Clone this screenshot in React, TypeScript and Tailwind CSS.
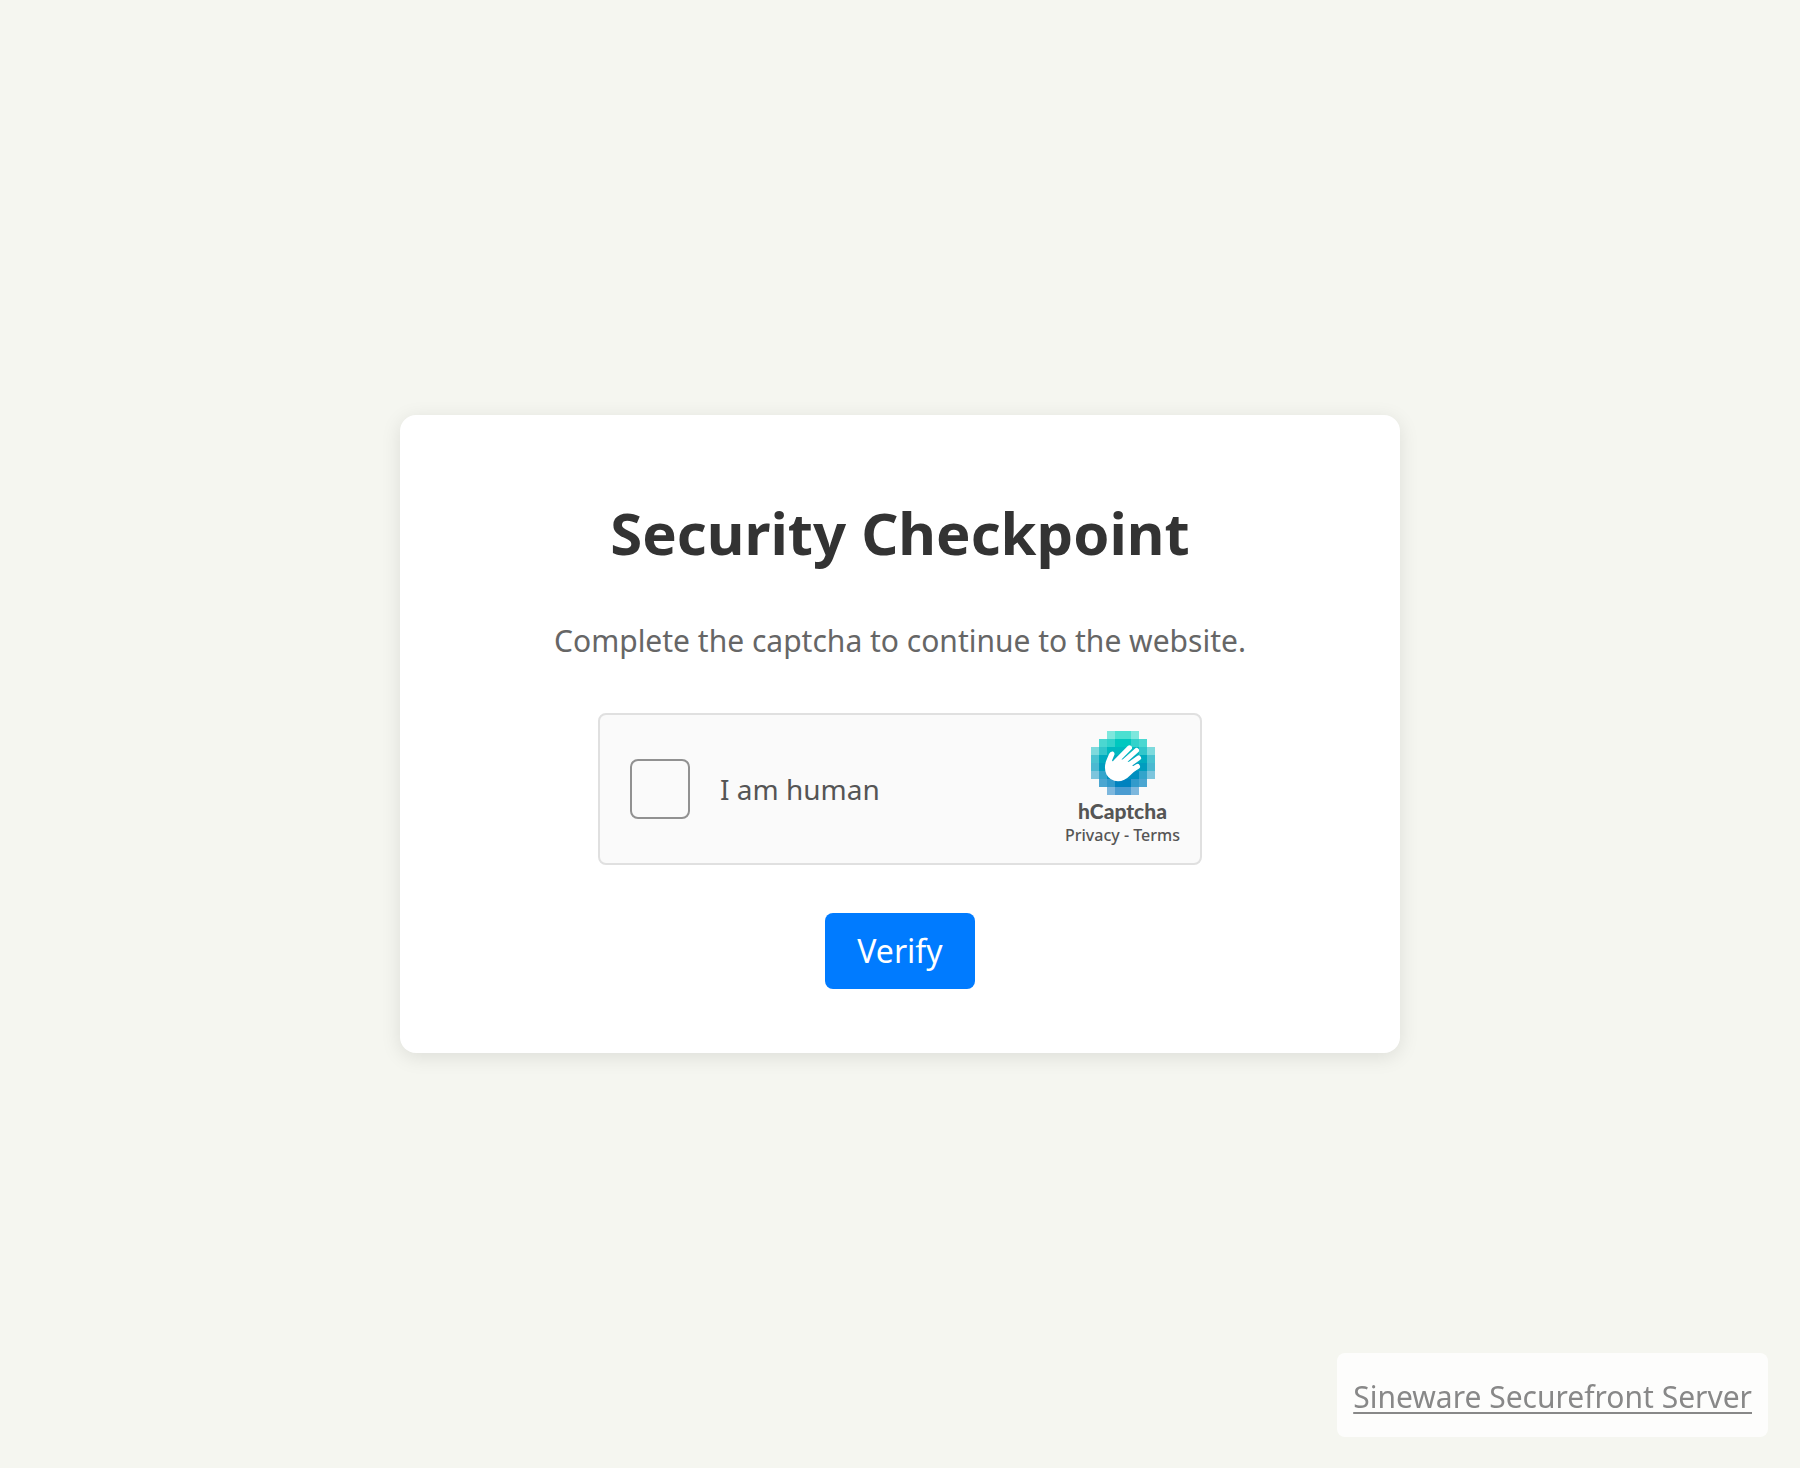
const TEAL_ROWS = [
  { color: '#00D4BF', alphas: [0, 0, 0.5, 0.7, 0.7, 0.5, 0, 0] },
  { color: '#00C8BF', alphas: [0, 0.7, 0.8, 1, 1, 0.8, 0.7, 0] },
  { color: '#00B9BF', alphas: [0.5, 0.8, 1, 1, 1, 1, 0.8, 0.5] },
  { color: '#00ABBF', alphas: [0.7, 1, 1, 1, 1, 1, 1, 0.7] },
  { color: '#009DBF', alphas: [0.7, 1, 1, 1, 1, 1, 1, 0.7] },
  { color: '#008FBF', alphas: [0.5, 0.8, 1, 1, 1, 1, 0.8, 0.5] },
  { color: '#0082BF', alphas: [0, 0.7, 0.8, 1, 1, 0.8, 0.7, 0] },
  { color: '#0074BF', alphas: [0, 0, 0.5, 0.7, 0.7, 0.5, 0, 0] },
];

function HandLogo() {
  return (
    <svg viewBox="0 0 64 64" className="size-16" aria-hidden="true">
      {TEAL_ROWS.map((row, y) =>
        row.alphas.map((alpha, x) =>
          alpha > 0 ? (
            <rect key={`${x}-${y}`} x={x * 8} y={y * 8} width="8" height="8" fill={row.color} fillOpacity={alpha} shapeRendering="crispEdges" />
          ) : null,
        ),
      )}
      <path
        fill="#fff"
        d="M15.300 29.500 L18 23 Q19.200 20 22 20.500 Q24.300 21.500 23.200 24.300 L21 29.500 Q22 31.200 23.500 30 L27 27 L38 31 L43 36 L47 37 L39 44.500 Q33.500 50.300 27 50.300 Q19 50 15.500 43.500 Q12.500 37 15.300 29.500Z"
      />
      <g stroke="#fff" strokeWidth="5" strokeLinecap="round" fill="none">
        <path d="M24.500 31 L38.500 16.800" />
        <path d="M28 35 L45.500 19.500" />
        <path d="M32 38 L47.500 27" />
        <path d="M34 43 L46.500 35.500" />
      </g>
    </svg>
  );
}

export default function App() {
  return (
    <div className="flex min-h-screen flex-col items-center justify-center bg-[#f5f6f0] font-['Noto_Sans',sans-serif]">
      <main className="flex w-full max-w-[1000px] flex-col items-center rounded-2xl bg-white px-16 pt-20 pb-16 shadow-[0_4px_20px_rgba(0,0,0,0.1)]">
        <h1 className="text-[58px] leading-[76px] font-bold text-[#333]">Security Checkpoint</h1>
        <p className="mt-11 text-[30px] leading-[52px] text-[#666]">Complete the captcha to continue to the website.</p>
        <form className="mt-[46px] flex flex-col items-center" onSubmit={(e) => e.preventDefault()}>
          <div className="flex h-[152px] w-[604px] items-center rounded-lg border-2 border-[#e0e0e0] bg-[#fafafa] pr-5 pl-[30px]">
            <input id="human" type="checkbox" className="size-[60px] shrink-0 appearance-none rounded-lg border-2 border-[#919191] bg-[#fafafa] checked:bg-[#0074bf]" />
            <label htmlFor="human" className="ml-[30px] flex-1 text-[28px] text-[#555]">I am human</label>
            <div className="flex flex-col items-center text-[#555]">
              <HandLogo />
              <span className="mt-1 font-['Lato',sans-serif] text-[21px] leading-6 font-black">hCaptcha</span>
              <div className="text-base leading-6 font-medium">
                <a href="#privacy">Privacy</a> - <a href="#terms">Terms</a>
              </div>
            </div>
          </div>
          <button type="submit" className="mt-12 h-[76px] rounded-lg bg-[#007bff] px-8 text-[32px] text-white">Verify</button>
        </form>
      </main>
      <footer className="fixed right-8 bottom-[31px] rounded-lg bg-white/80 px-4 pt-[18px] pb-[14px]">
        <a href="#sineware" className="block text-[30px] leading-[52px] text-[#888] underline decoration-2 underline-offset-4">Sineware Securefront Server</a>
      </footer>
    </div>
  );
}
